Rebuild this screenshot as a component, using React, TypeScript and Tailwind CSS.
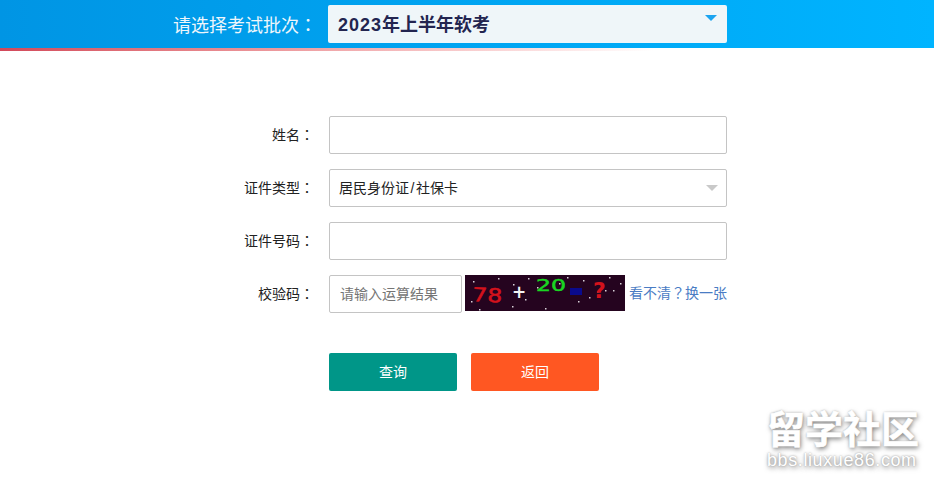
const cjk = "font-['Liberation_Sans','Noto_Sans_CJK_SC',sans-serif]";

// captcha noise dots
const dots = [
  [8, 6], [33, 3], [6, 26], [14, 34], [48, 9], [60, 24], [63, 3], [72, 12], [80, 33], [94, 8], [102, 2],
  [113, 26], [118, 5], [132, 16], [140, 15], [148, 15], [144, 2], [155, 8], [124, 22], [47, 31],
];

function Captcha() {
  return (
    <svg width="160" height="36" viewBox="0 0 160 36" className="ml-[3px] shrink-0 self-start">
      <rect width="160" height="36" fill="#25041f" />
      {dots.map(([x, y], i) => (
        <rect key={i} x={x} y={y} width="1.5" height="1.5" fill="#d8d0d8" />
      ))}
      <text x="7" y="26" fontSize="19" fontFamily="DejaVu Sans" stroke="#d3121c" strokeWidth="0.5" fill="#d3121c" textLength="30" lengthAdjust="spacingAndGlyphs" transform="rotate(3 7 26)">78</text>
      <text x="47" y="23" fontSize="17" fontWeight="700" fontFamily="DejaVu Sans" fill="#f4f4f4">+</text>
      <text x="71" y="16" fontSize="16" fontFamily="DejaVu Sans" stroke="#19d622" strokeWidth="0.5" fill="#19d622" textLength="30" lengthAdjust="spacingAndGlyphs">20</text>
      <rect x="105" y="13" width="12" height="7" fill="#0a0a8c" />
      <text x="128" y="23" fontSize="22" fontWeight="700" fontFamily="DejaVu Sans" fill="#d3121c">?</text>
    </svg>
  );
}

function Colon() {
  return <span className="font-['Noto_Sans_CJK_TC',sans-serif]">：</span>;
}

function Row({ label, children }: { label: string; children: React.ReactNode }) {
  return (
    <div className="flex items-center h-[38px] mb-[15px]">
      <label className="w-[314px] text-right text-[14px] text-[#222]">{label}<Colon /></label>
      <div className="ml-[15px] w-[398px] h-full flex items-center">{children}</div>
    </div>
  );
}

export default function App() {
  return (
    <div className={`relative w-[934px] h-[481px] bg-white overflow-hidden ${cjk}`}>
      {/* top bar */}
      <div className="h-12 bg-gradient-to-r from-[#0095e4] to-[#00b4ff] flex items-center">
        <div className="w-[317px] pt-[3px] text-right text-[18px] text-[#eef6fb]">请选择考试批次<Colon /></div>
        <div className="relative ml-[11px] w-[399px] h-[38px] bg-[#eff6f9] rounded-[2px] pl-[10px] pt-[3px] flex items-center text-[18px] font-bold text-[#232550]">
          <span className="tracking-[1px]">2023</span>年上半年软考
          <span className="absolute right-[10px] top-[10px] w-0 h-0 border-x-[6px] border-x-transparent border-t-[6px] border-t-[#1ba4f0]" />
        </div>
      </div>
      <div className="h-[3px] bg-gradient-to-r from-[#d2485a] to-white to-[70%]" />

      {/* form */}
      <form className="mt-[65px]">
        <Row label="姓名">
          <input className="w-full h-full border border-[#c4c4c4] rounded-[2px] bg-white" />
        </Row>
        <Row label="证件类型">
          <div className="relative w-full h-full border border-[#c4c4c4] rounded-[2px] pl-[9px] flex items-center text-[14px] text-[#222] whitespace-pre">
            居民身份证<span className="mx-[1.5px]">/</span>社保卡
            <span className="absolute right-[8px] top-[15px] w-0 h-0 border-x-[6px] border-x-transparent border-t-[6px] border-t-[#c9c9c9]" />
          </div>
        </Row>
        <Row label="证件号码">
          <input className="w-full h-full border border-[#c4c4c4] rounded-[2px] bg-white" />
        </Row>
        <Row label="校验码">
          <input
            placeholder="请输入运算结果"
            className="w-[133px] shrink-0 h-full border border-[#c4c4c4] rounded-[2px] bg-white pl-[10px] text-[14px] placeholder:text-[#757575]"
          />
          <Captcha />
          <a className="ml-[4px] whitespace-nowrap text-[14px] text-[#4a7cc4] -mt-[2px]">看不清<span className="font-['Noto_Sans_CJK_TC',sans-serif]">？</span>换一张</a>
        </Row>
        <div className="flex mt-[40px] ml-[329px] gap-[14px]">
          <button type="button" className="w-32 h-[38px] rounded-[2px] bg-[#009688] text-white text-[14px]">查询</button>
          <button type="button" className="w-32 h-[38px] rounded-[2px] bg-[#ff5722] text-white text-[14px]">返回</button>
        </div>
      </form>

      {/* watermark */}
      <div className="absolute left-[767px] top-[408px] w-[155px] text-white [-webkit-text-stroke:0.6px_white] [text-shadow:0_0_2px_#999,1px_2px_5px_#777] pointer-events-none">
        <div className="text-[38px] leading-[44px] font-bold whitespace-nowrap">留学社区</div>
        <div className="text-[18px] leading-[16px] whitespace-nowrap tracking-[0.6px] [-webkit-text-stroke:0] font-['Liberation_Sans',sans-serif]">bbs.liuxue86.com</div>
      </div>
    </div>
  );
}
